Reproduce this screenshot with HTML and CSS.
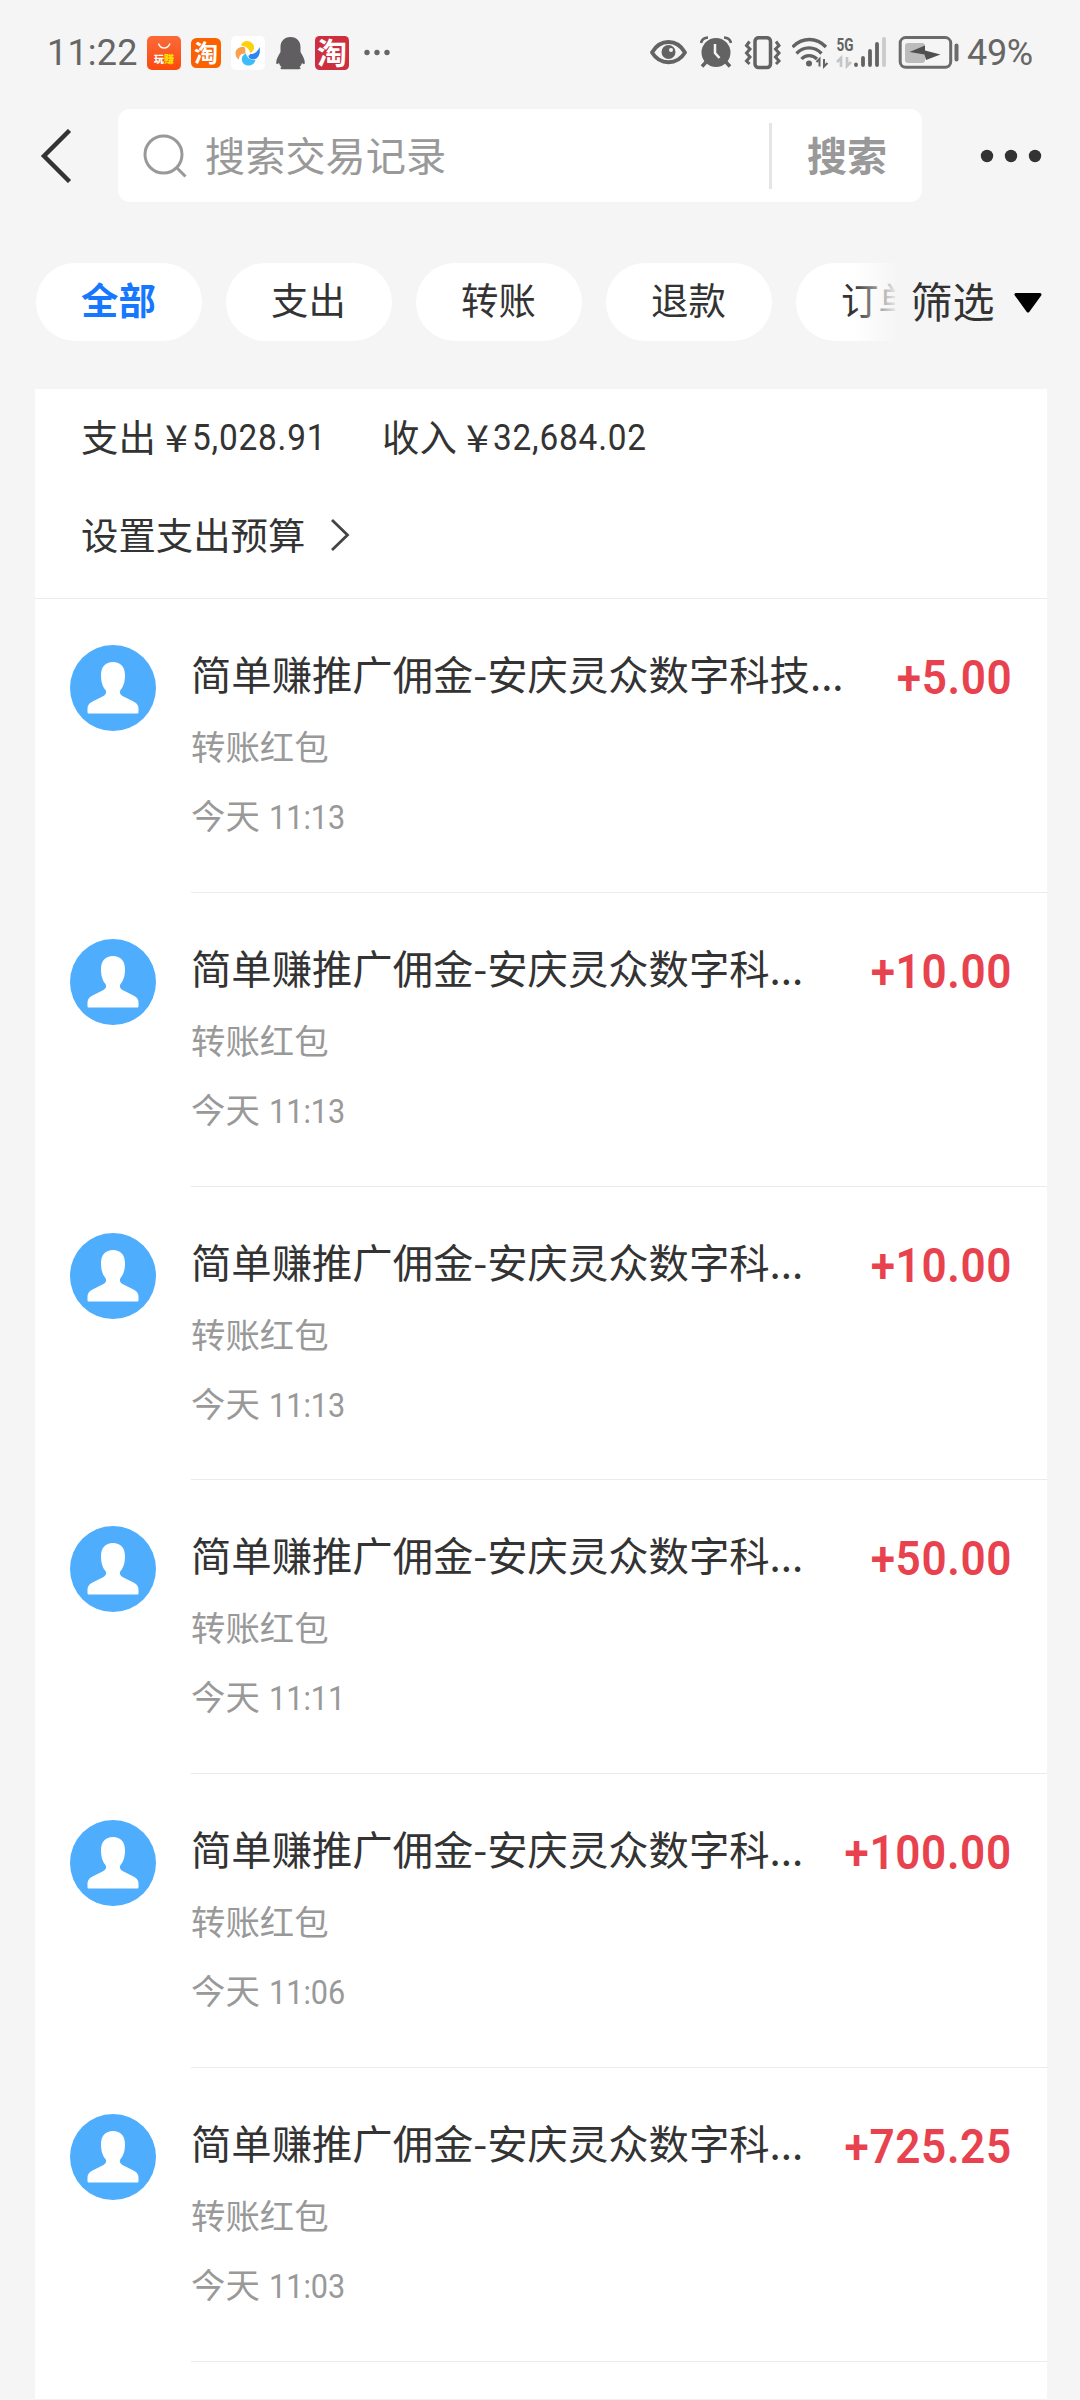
FILE: index.html
```html
<!DOCTYPE html>
<html lang="zh-CN">
<head>
<meta charset="utf-8">
<title>账单</title>
<link rel="stylesheet" href="styles.css">
</head>
<body>
<svg width="0" height="0" class="defs">
  <symbol id="person" viewBox="0 0 86 86">
    <circle cx="43" cy="43" r="43" fill="#4eaefd"/>
    <path fill="#fff" d="M43 17c7.500 0 12 5 12 13 0 7-1.500 11.500-4.500 15-1.500 3 0 5 3 6.500l9 4.500c4 2 6 4 6 8v3c0 1-.5 1.500-1.500 1.500H19c-1 0-1.500-.5-1.500-1.500v-3c0-4 2-6 6-8l9-4.500c3-1.500 4.500-3.500 3-6.500-3-3.500-4.500-8-4.500-15 0-8 4.500-13 12-13z"/>
  </symbol>
</svg>
<div class="screen">
  <header class="status">
    <div class="status-left">
      <span class="clock">11:22</span>
      <svg class="i-shop" width="34" height="34" viewBox="0 0 34 34">
        <defs><linearGradient id="g" x1="0" y1="0" x2="0" y2="1"><stop offset="0" stop-color="#fb6a3a"/><stop offset="1" stop-color="#fb4a0c"/></linearGradient></defs>
        <rect width="34" height="34" rx="5" fill="url(#g)"/>
        <path d="M11.500 7.500c2 6 9 6 11.500 0" fill="none" stroke="#fff" stroke-width="1.400"/>
        <text x="7" y="26.500" class="mini" fill="#fff">玩</text><text x="17" y="26.500" class="mini" fill="#ffe000">赚</text>
      </svg>
      <svg class="i-tao" width="30" height="30" viewBox="0 0 30 30">
        <rect width="30" height="30" rx="5.500" fill="#fb6100"/><text x="3" y="24" class="tao" font-size="24">淘</text>
      </svg>
      <svg class="i-wheel" width="34" height="34" viewBox="0 0 34 34">
        <rect width="34" height="34" rx="5" fill="#fff"/>
        <path fill="#f9a14c" d="M14 11.500c-5-1.500-9.500 1.500-9.500 6 0 3 1.500 5 3.500 6 0-4 2-6 6.500-6z"/>
        <path fill="#fdd10c" d="M10 9.500c1-5 8-6 11.500-2 3 3.500 1.500 8-2.500 9.500-.5-4-3-6.500-9-7.500z"/>
        <path fill="#2f86ee" d="M28.500 11c1.500 7-1.500 12.500-6.500 12.500-3.500 0-5.500-3-4.500-6 4.500 1.500 9-1 11-6.500z"/>
        <path fill="#3cbdf8" d="M24.500 24c-1.500 6-8.500 7-12 3.500-3-3.500-2-8.500 3-10.500 0 4.500 3 7 9 7z"/>
        <circle cx="17" cy="17.500" r="2.200" fill="#fff"/>
      </svg>
      <svg class="i-qq" width="29" height="34" viewBox="0 0 29 34">
        <path fill="#605e60" d="M14.500 1c6.500 0 10 4.500 10 10v5c2.500 4 4.300 7.500 4.300 11 0 1.500-1.300 1.500-2.800 0-.5 2-1.500 3-2.500 4 1.500 1 1.500 2.300-.5 2.300H6c-2 0-2-1.300-.5-2.300-1-1-2-2-2.500-4-1.500 1.500-2.800 1.500-2.800 0 0-3.500 1.800-7 4.300-11v-5c0-5.500 3.500-10 10-10z"/>
      </svg>
      <svg class="i-tao2" width="34" height="34" viewBox="0 0 34 34">
        <rect width="34" height="34" rx="4.500" fill="#cd2f3f"/><text x="2" y="27.500" class="tao" font-size="30">淘</text>
      </svg>
      <svg class="i-more" width="26" height="34" viewBox="0 0 26 34" fill="#666"><circle cx="3" cy="16.500" r="2.700"/><circle cx="13" cy="16.500" r="2.700"/><circle cx="23" cy="16.500" r="2.700"/></svg>
    </div>
    <div class="status-right">
      <svg width="38" height="34" viewBox="650 36 38 34"><path d="M653 52.500c8-14 25-14 33 0-8 13-25 13-33 0z" fill="none" stroke="#636363" stroke-width="3.800" stroke-linejoin="round"/><circle cx="669.500" cy="52" r="7" fill="#636363"/><circle cx="672" cy="50" r="2" fill="#f5f5f5"/></svg>
      <svg class="i-alarm" width="32" height="34" viewBox="701 36 32 34"><g fill="none" stroke="#636363"><path d="M702 43q1-5 7-5.500M732 43q-1-5-7-5.500" stroke-width="2.700"/><path d="M708 61l-5 5.500M726 61l5 5.500" stroke-width="3.500"/></g><circle cx="717" cy="52.500" r="14.500" fill="#636363"/><path d="M716 44v9l4.500 5" fill="none" stroke="#f5f5f5" stroke-width="2.500"/></svg>
      <svg class="i-vib" width="38" height="34" viewBox="745 36 38 34" fill="none" stroke="#636363"><rect x="756" y="37.700" width="15.500" height="29.800" rx="3.500" stroke-width="3.500"/><path d="M750.500 41.500l-3 4 3.500 3.500-3.500 4 3.500 4-3.500 4 3 3M777 41.500l3 4-3.500 3.500 3.500 4-3.500 4 3.500 4-3 3" stroke-width="3"/></svg>
      <svg class="i-wifi" width="37" height="34" viewBox="793 36 37 34" fill="none" stroke="#636363" stroke-width="3.300"><path d="M793.500 47c10-10 24-10 33.500 0M797.500 53.500c7-7.500 18-7.500 25 0M802.500 59c4-4.500 11-4.500 15.500 0"/><circle cx="810" cy="63.500" r="3" fill="#636363" stroke="none"/><path d="M817.500 62l3-3v7.500M825 59v7.500l3.500-3.500" stroke-width="2"/></svg>
      <svg class="i-cell" width="50" height="34" viewBox="837 36 50 34"><text x="837.500" y="50.500" class="g5" textLength="17" lengthAdjust="spacingAndGlyphs">5G</text><path d="M838 62l4-4v9M848 57v9l4-4" fill="none" stroke="#c6c6c6" stroke-width="2.700"/><g stroke-width="3.800" stroke-linecap="round" stroke="#636363"><path d="M857 64.500v.5M864 58v7M871 51v14M878 44v21"/><path d="M885 39v26" stroke="#cbcbcb"/></g></svg>
      <svg class="i-bat" width="62" height="34" viewBox="899 36 62 34"><rect x="901.200" y="37.600" width="50.500" height="29.700" rx="5.500" fill="none" stroke="#6b6b6b" stroke-width="3"/><rect x="906" y="43" width="20" height="20" rx="3" fill="#bcbcbc"/><path d="M910.500 52l15.500-6.500v5l15.500 4-14.500 5.500-1.500-5.500z" fill="#505050"/><path d="M957.500 45.500v14" stroke="#6b6b6b" stroke-width="4" stroke-linecap="round"/></svg>
      <span class="pct">49%</span>
    </div>
  </header>

  <nav class="searchbar">
    <svg class="back" width="32" height="54" viewBox="0 0 32 54"><path d="M30.500 1.500L5 27l25.500 25.500" fill="none" stroke="#333" stroke-width="4.500" transform="translate(-1 0)"/></svg>
    <div class="search">
      <svg width="46" height="46" viewBox="0 0 46 46" fill="none" stroke="#999" stroke-width="3"><circle cx="21.500" cy="21.500" r="18.500"/><path d="M34 34l9.500 9.500"/></svg>
      <span class="placeholder">搜索交易记录</span>
      <span class="go">搜索</span>
    </div>
    <svg class="dots" width="62" height="14" viewBox="0 0 62 14" fill="#333"><circle cx="7" cy="7" r="6.200"/><circle cx="31" cy="7" r="6.200"/><circle cx="55" cy="7" r="6.200"/></svg>
  </nav>

  <div class="filters">
    <div class="chips">
      <span class="chip active">全部</span><span class="chip">支出</span><span class="chip">转账</span><span class="chip">退款</span><span class="chip">订单</span>
    </div>
    <span class="filter">筛选</span>
    <svg class="tri" width="30" height="22" viewBox="0 0 30 22"><path d="M3 2.500h24L15 19z" stroke="#000" stroke-width="3" stroke-linejoin="round"/></svg>
  </div>

  <main class="card">
    <section class="summary">
      <div class="totals">
        <span class="total out">支出<span class="yen">¥</span><span class="num">5,028.91</span></span>
        <span class="total">收入<span class="yen">¥</span><span class="num">32,684.02</span></span>
      </div>
      <div class="budget">设置支出预算<svg width="22" height="36" viewBox="0 0 22 36"><path d="M3 3l15.500 15L3 33" fill="none" stroke="#444" stroke-width="2.800"/></svg></div>
    </section>
    <article class="row"><svg class="avatar"><use href="#person"/></svg><div class="body"><div class="line"><h3>简单赚推广佣金-安庆灵众数字科技...</h3><span class="amount">+5.00</span></div><p class="kind">转账红包</p><p class="time">今天 <span>11:13</span></p></div></article>
    <article class="row"><svg class="avatar"><use href="#person"/></svg><div class="body"><div class="line"><h3>简单赚推广佣金-安庆灵众数字科...</h3><span class="amount">+10.00</span></div><p class="kind">转账红包</p><p class="time">今天 <span>11:13</span></p></div></article>
    <article class="row"><svg class="avatar"><use href="#person"/></svg><div class="body"><div class="line"><h3>简单赚推广佣金-安庆灵众数字科...</h3><span class="amount">+10.00</span></div><p class="kind">转账红包</p><p class="time">今天 <span>11:13</span></p></div></article>
    <article class="row"><svg class="avatar"><use href="#person"/></svg><div class="body"><div class="line"><h3>简单赚推广佣金-安庆灵众数字科...</h3><span class="amount">+50.00</span></div><p class="kind">转账红包</p><p class="time">今天 <span>11:11</span></p></div></article>
    <article class="row"><svg class="avatar"><use href="#person"/></svg><div class="body"><div class="line"><h3>简单赚推广佣金-安庆灵众数字科...</h3><span class="amount">+100.00</span></div><p class="kind">转账红包</p><p class="time">今天 <span>11:06</span></p></div></article>
    <article class="row"><svg class="avatar"><use href="#person"/></svg><div class="body"><div class="line"><h3>简单赚推广佣金-安庆灵众数字科...</h3><span class="amount">+725.25</span></div><p class="kind">转账红包</p><p class="time">今天 <span>11:03</span></p></div></article>
  </main>
</div>
</body>
</html>
```
FILE: styles.css
```css
* { box-sizing: border-box; margin: 0; padding: 0; }
body { background: #f5f5f5; color: #333; font-family: "Noto Sans CJK SC", sans-serif; }
svg { display: block; flex: none; }
.defs { position: absolute; }
.screen { width: 1080px; height: 2400px; overflow: hidden; display: flex; flex-direction: column; white-space: nowrap; }

.status { height: 109px; padding: 36px 43px 0 47px; display: flex; justify-content: space-between; align-items: flex-start; }
.status-left, .status-right { display: flex; height: 34px; align-items: center; }
.clock, .pct { font: 36px/34px Roboto, sans-serif; color: #666; }
.clock { width: 100px; letter-spacing: .2px; }
.pct { width: 70px; margin-left: 7px; letter-spacing: -.3px; }
.i-tao { margin-left: 10px; }
.i-wheel { margin-left: 10px; }
.i-qq { margin-left: 10.500px; }
.i-tao2 { margin-left: 10.500px; }
.i-more { margin-left: 15px; margin-right: -2px; }
.i-alarm { margin-left: 13px; }
.i-vib { margin-left: 12px; }
.i-wifi { margin-left: 10px; }
.i-cell { margin-left: 7px; }
.i-bat { margin-left: 12px; }
.mini { font: 900 10px "Noto Sans CJK SC", sans-serif; }
.tao { font-family: "Noto Sans CJK SC", sans-serif; font-weight: 700; fill: #fff; }
.g5 { font: 700 19px Roboto, sans-serif; fill: #636363; }

.searchbar { height: 93px; padding: 0 38px 0 40px; display: flex; align-items: center; }
.search { width: 804px; height: 93px; margin-left: 46px; padding-left: 24px; background: #fff; border-radius: 12px; display: flex; align-items: center; color: #999; font-size: 40.200px; line-height: 60px; }
.placeholder { margin: -4px 0 0 17px; flex: 1; }
.go { width: 153px; height: 66px; padding-left: 35px; border-left: 3px solid #e5e5e5; font-weight: 700; font-size: 40px; line-height: 62px; }
.dots { margin-left: 58px; }

.filters { height: 187px; padding: 61px 37px 0 35.500px; display: flex; align-items: flex-start; }
.chips { width: 859px; display: flex; gap: 24px; overflow: hidden; position: relative; }
.chips::after { content: ""; position: absolute; right: 0; top: 0; width: 42px; height: 78px; background: linear-gradient(90deg, #f5f5f500, #f5f5f5e8); }
.chip { flex: none; width: 166px; height: 77.500px; border-radius: 39px; background: #fff; text-align: center; font-size: 37.400px; line-height: 73px; }
.active { color: #1677ff; font-weight: 700; }
.filter { margin-left: 16px; font-size: 42px; line-height: 73px; }
.tri { margin: 29px 0 0 18px; }

.card { width: 1012px; margin-left: 35px; background: #fff; flex: 1; border-bottom: 1px solid #f0f0f0; }
.summary { height: 209.800px; border-bottom: 1.500px solid #ebebeb; padding: 19px 0 0 46px; font-size: 37.400px; }
.totals { display: flex; line-height: 56px; }
.total { display: flex; }
.out { width: 301px; }
.yen { font-size: 37.500px; margin-left: 5px; width: 31px; text-align: center; transform: scaleX(1.1); }
.num { font-family: Roboto, sans-serif; font-size: 37.500px; letter-spacing: .9px; transform: scaleX(.89); transform-origin: left; padding-top: 1px; }
.budget { margin-top: 41px; line-height: 56px; display: flex; align-items: center; }
.budget svg { margin: 1px 0 0 24px; }

.row { height: 293.900px; display: flex; padding-left: 35px; }
.avatar { width: 86px; height: 86px; margin: 46px 35px 0 0; }
.body { flex: 1; padding-top: 44px; border-bottom: 1.500px solid #ebebeb; }
.line { display: flex; justify-content: space-between; padding-right: 35px; height: 60px; align-items: center; }
h3 { font-weight: 400; font-size: 40.350px; line-height: 60px; }
.amount { font: 600 49px/60px Roboto, sans-serif; color: #e8424f; letter-spacing: .7px; transform: scaleX(.9); transform-origin: right; padding-top: 10px; }
.kind, .time { font-size: 34.400px; color: #999; line-height: 50px; }
.kind { margin-top: 17px; }
.time { margin-top: 19px; }
.time span { display: inline-block; font-family: Roboto, sans-serif; font-size: 34px; transform: scaleX(.9); transform-origin: left; margin-left: 1px; }
```
